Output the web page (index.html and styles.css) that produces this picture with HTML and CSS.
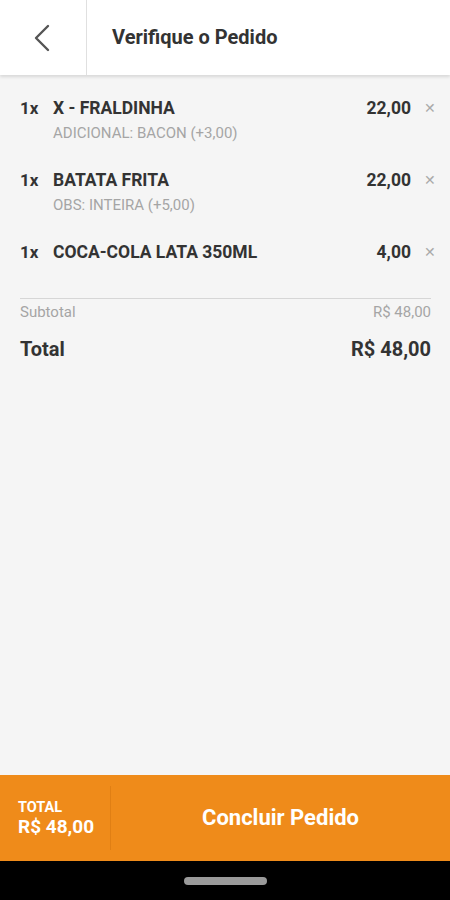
FILE: index.html
```html
<!DOCTYPE html>
<html lang="pt">
<head>
<meta charset="utf-8">
<link rel="stylesheet" href="styles.css">
</head>
<body>
<div class="app">
  <header class="topbar">
    <div class="back">
      <svg width="20" height="30" viewBox="0 0 20 30"><path d="M15 3 L3 15 L15 27" fill="none" stroke="#555" stroke-width="2.4" stroke-linecap="round" stroke-linejoin="round"/></svg>
    </div>
    <h1 class="title">Verifique o Pedido</h1>
  </header>
  <main class="content">
    <ul class="items">
      <li class="item">
        <span class="qty">1x</span>
        <div class="info">
          <div class="name">X - FRALDINHA</div>
          <div class="note">ADICIONAL: BACON (+3,00)</div>
        </div>
        <span class="price">22,00</span>
        <span class="remove">&#x2715;</span>
      </li>
      <li class="item">
        <span class="qty">1x</span>
        <div class="info">
          <div class="name">BATATA FRITA</div>
          <div class="note">OBS: INTEIRA (+5,00)</div>
        </div>
        <span class="price">22,00</span>
        <span class="remove">&#x2715;</span>
      </li>
      <li class="item">
        <span class="qty">1x</span>
        <div class="info">
          <div class="name">COCA-COLA LATA 350ML</div>
        </div>
        <span class="price">4,00</span>
        <span class="remove">&#x2715;</span>
      </li>
    </ul>
    <div class="summary">
      <div class="row sub"><span>Subtotal</span><span>R$ 48,00</span></div>
      <div class="row total"><span>Total</span><span>R$ 48,00</span></div>
    </div>
  </main>
  <footer class="action">
    <div class="sum">
      <span class="lbl">TOTAL</span>
      <span class="val">R$ 48,00</span>
    </div>
    <div class="cta">Concluir Pedido</div>
  </footer>
  <div class="navbar"><span class="pill"></span></div>
</div>
</body>
</html>
```

FILE: styles.css
```css
* { box-sizing: border-box; }
html, body { margin: 0; padding: 0; }
body {
  font-family: Roboto, "Noto Sans", Arial, sans-serif;
  background: #f5f5f5;
  color: #333;
}
.app {
  width: 450px;
  height: 900px;
  display: flex;
  flex-direction: column;
  background: #f5f5f5;
}
.topbar {
  height: 75px;
  background: #fff;
  display: flex;
  align-items: stretch;
  box-shadow: 0 2px 3px rgba(0,0,0,0.12);
  position: relative;
  z-index: 1;
  flex-shrink: 0;
}
.back {
  width: 87px;
  border-right: 1.5px solid #e0e0e0;
  display: flex;
  align-items: center;
  justify-content: center;
}
.title {
  margin: 0 0 0 25px;
  font-size: 20px;
  font-weight: 700;
  color: #333;
  align-self: center;
  padding-bottom: 1px;
}
.content {
  flex: 1;
  padding: 0 14px 0 20px;
}
.items {
  list-style: none;
  margin: 0;
  padding: 23px 0 0;
}
.item {
  display: flex;
  align-items: flex-start;
  min-height: 72px;
}
.item:last-child { min-height: 56px; }
.qty {
  width: 33px;
  font-size: 17px;
  font-weight: 700;
  line-height: 20px;
  color: #333;
}
.info { flex: 1; }
.name {
  font-size: 17.5px;
  font-weight: 700;
  line-height: 20px;
  color: #333;
}
.note {
  font-size: 15px;
  line-height: 18px;
  margin-top: 6px;
  color: #a5a5a5;
}
.price {
  font-size: 17.5px;
  font-weight: 700;
  line-height: 20px;
  color: #333;
}
.remove {
  width: 25px;
  text-align: right;
  font-size: 14px;
  line-height: 20px;
  color: #aaa;
}
.summary {
  border-top: 1.5px solid #d6d6d6;
  margin-right: 5px;
  padding-top: 4px;
}
.row {
  display: flex;
  justify-content: space-between;
}
.sub {
  font-size: 15px;
  line-height: 18px;
  color: #a5a5a5;
}
.total {
  margin-top: 17px;
  font-size: 20px;
  font-weight: 700;
  line-height: 22px;
  color: #333;
}
.action {
  height: 86px;
  background: #ef8b1a;
  display: flex;
  align-items: center;
  flex-shrink: 0;
  color: #fff;
}
.sum {
  width: 111px;
  height: 64px;
  border-right: 1px solid #e07f14;
  display: flex;
  flex-direction: column;
  justify-content: center;
  padding-left: 18px;
}
.lbl {
  font-size: 14.5px;
  font-weight: 700;
  line-height: 17px;
}
.val {
  font-size: 19px;
  font-weight: 700;
  line-height: 22px;
}
.cta {
  flex: 1;
  text-align: center;
  font-size: 22px;
  font-weight: 700;
  padding-bottom: 2px;
}
.navbar {
  height: 39px;
  background: #000;
  display: flex;
  align-items: center;
  justify-content: center;
  flex-shrink: 0;
}
.pill {
  width: 83px;
  height: 8px;
  border-radius: 4px;
  background: #9a9a9a;
}
```
